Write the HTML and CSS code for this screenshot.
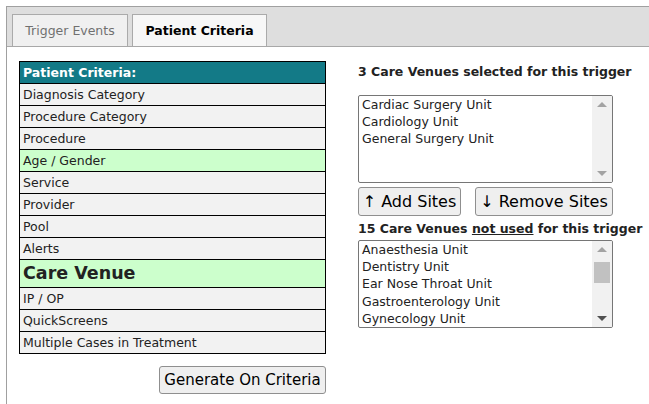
FILE: index.html
```html
<!DOCTYPE html>
<html>
<head>
<meta charset="utf-8">
<link rel="stylesheet" href="styles.css">
</head>
<body>
<div class="wrap">
  <div class="tabbar">
    <div class="tab">Trigger Events</div>
    <div class="tab active">Patient Criteria</div>
  </div>
  <div class="content">
    <div class="left">
      <div class="crit">
        <div class="crit-head">Patient Criteria:</div>
        <div class="row">Diagnosis Category</div>
        <div class="row">Procedure Category</div>
        <div class="row">Procedure</div>
        <div class="row on">Age / Gender</div>
        <div class="row">Service</div>
        <div class="row">Provider</div>
        <div class="row">Pool</div>
        <div class="row">Alerts</div>
        <div class="row on big">Care Venue</div>
        <div class="row">IP / OP</div>
        <div class="row">QuickScreens</div>
        <div class="row">Multiple Cases in Treatment</div>
      </div>
      <div class="gen-wrap"><button class="btn gen">Generate On Criteria</button></div>
    </div>
    <div class="right">
      <div class="label first">3 Care Venues selected for this trigger</div>
      <div class="listbox">
        <div class="items">
          <div class="opt">Cardiac Surgery Unit</div>
          <div class="opt">Cardiology Unit</div>
          <div class="opt">General Surgery Unit</div>
        </div>
        <div class="sb">
          <div class="arr up dim"></div>
          <div class="track"></div>
          <div class="arr down dim"></div>
        </div>
      </div>
      <div class="btns">
        <button class="btn site">↑ Add Sites</button>
        <button class="btn site">↓ Remove Sites</button>
      </div>
      <div class="label second">15 Care Venues <u>not used</u> for this trigger</div>
      <div class="listbox">
        <div class="items">
          <div class="opt">Anaesthesia Unit</div>
          <div class="opt">Dentistry Unit</div>
          <div class="opt">Ear Nose Throat Unit</div>
          <div class="opt">Gastroenterology Unit</div>
          <div class="opt">Gynecology Unit</div>
        </div>
        <div class="sb">
          <div class="arr up dim"></div>
          <div class="track"><div class="thumb"></div></div>
          <div class="arr down"></div>
        </div>
      </div>
    </div>
  </div>
</div>
</body>
</html>
```
FILE: styles.css
```css
html, body {
  margin: 0;
  padding: 0;
  background: #fff;
  overflow: hidden;
}
body {
  font-family: "DejaVu Sans", Verdana, sans-serif;
  font-size: 12.5px;
  color: #222;
}
.wrap {
  margin: 6px 0 0 6px;
  width: 642px;
  height: 397px;
  border-top: 1px solid #a0a0a0;
  border-left: 1px solid #a0a0a0;
}
.tabbar {
  background: #dedede;
  height: 32px;
  padding: 7px 0 0 5px;
  border-bottom: 1px solid #a8a8a8;
  display: flex;
  align-items: flex-end;
  gap: 4px;
}
.tab {
  height: 32px;
  box-sizing: border-box;
  border: 1px solid #aaa;
  border-bottom: none;
  background: #f0f0f0;
  color: #707070;
  display: flex;
  align-items: center;
  justify-content: center;
  width: 116px;
}
.tab.active {
  width: 135px;
  background: #f7f7f7;
  color: #000;
  font-weight: bold;
}
.content {
  display: flex;
  padding: 14px 0 0 12px;
  gap: 32px;
}
.left {
  width: 307px;
}
.crit {
  border: 1px solid #000;
  border-bottom: none;
}
.crit-head {
  background: #137a87;
  color: #fff;
  font-weight: bold;
  height: 21px;
  line-height: 21px;
  padding-left: 3px;
  border-bottom: 1px solid #000;
}
.row {
  background: #f2f2f2;
  height: 21px;
  line-height: 21px;
  padding-left: 3px;
  border-bottom: 1px solid #000;
  white-space: nowrap;
}
.row.on {
  background: #ccffcc;
}
.row.big {
  height: 27px;
  line-height: 27px;
  font-size: 17.5px;
  font-weight: bold;
}
.gen-wrap {
  display: flex;
  justify-content: flex-end;
  margin-top: 12px;
}
.btn {
  font-family: "DejaVu Sans", Verdana, sans-serif;
  background: #efefef;
  border: 1px solid #8f8f8f;
  border-radius: 3px;
  color: #000;
  padding: 0;
  white-space: nowrap;
}
.gen {
  width: 167px;
  height: 28px;
  font-size: 15px;
}
.right {
  width: 255px;
}
.label {
  font-weight: bold;
  white-space: nowrap;
  line-height: 16px;
}
.label.first {
  margin-top: 3px;
  margin-bottom: 15px;
}
.label.second {
  margin-top: 5px;
  margin-bottom: 3px;
}
.listbox {
  height: 86px;
  border: 1px solid #767676;
  border-radius: 2px;
  display: flex;
  background: #fff;
  overflow: hidden;
}
.items {
  flex: 1;
  padding: 0 0 0 3px;
  white-space: nowrap;
}
.opt {
  line-height: 17.2px;
  height: 17.2px;
}
.sb {
  width: 20px;
  background: #f1f1f1;
  display: flex;
  flex-direction: column;
}
.arr {
  height: 17px;
  position: relative;
}
.arr::after {
  content: "";
  position: absolute;
  left: 5px;
  width: 0;
  height: 0;
  border-left: 5px solid transparent;
  border-right: 5px solid transparent;
}
.arr.up::after {
  top: 6px;
  border-bottom: 5px solid #505050;
}
.arr.down::after {
  top: 6px;
  border-top: 5px solid #505050;
}
.arr.dim.up::after {
  border-bottom-color: #a3a3a3;
}
.arr.dim.down::after {
  border-top-color: #a3a3a3;
}
.track {
  flex: 1;
  padding: 4px 2px 0 2px;
}
.thumb {
  height: 21px;
  background: #c1c1c1;
}
.btns {
  display: flex;
  justify-content: space-between;
  margin-top: 4px;
}
.site {
  height: 29px;
  font-size: 16px;
}
.site:first-child {
  width: 103px;
}
.site:last-child {
  width: 138px;
}
```
